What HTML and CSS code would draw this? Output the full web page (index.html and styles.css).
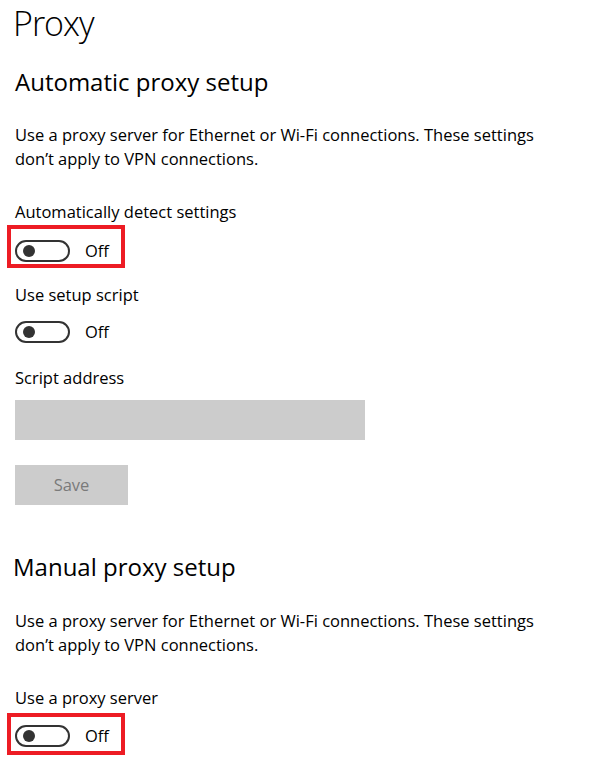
FILE: index.html
```html
<!doctype html>
<html>
  <head>
    <title>Proxy</title>
    <link rel="stylesheet" href="styles.css">
  </head>
  <body>
    <div id="main">
      <h1 class="page-title">Proxy</h1>

      <h2 class="section-title">Automatic proxy setup</h2>
      <p class="desc">Use a proxy server for Ethernet or Wi-Fi connections. These settings don’t apply to VPN connections.</p>

      <div class="label">Automatically detect settings</div>
      <div class="highlight">
        <div class="toggle"><span class="knob"></span></div>
        <span class="state">Off</span>
      </div>

      <div class="label after-box">Use setup script</div>
      <div class="toggle-row">
        <div class="toggle"><span class="knob"></span></div>
        <span class="state">Off</span>
      </div>

      <div class="label after-row">Script address</div>
      <div class="textbox"></div>
      <div class="btn">Save</div>

      <h2 class="section-title manual">Manual proxy setup</h2>
      <p class="desc">Use a proxy server for Ethernet or Wi-Fi connections. These settings don’t apply to VPN connections.</p>

      <div class="label">Use a proxy server</div>
      <div class="highlight last">
        <div class="toggle"><span class="knob"></span></div>
        <span class="state">Off</span>
      </div>
    </div>
  </body>
</html>
```

FILE: styles.css
```css
body {
  margin: 0;
  font-family: "Open Sans", "Noto Sans", sans-serif;
  font-size: 16.5px;
  color: #000;
  background: #fff;
}
#main {
  padding: 0 0 0 15px;
}
.page-title {
  margin: 0 0 0 -2px;
  font-size: 34px;
  font-weight: 300;
  letter-spacing: -1px;
  line-height: 46px;
}
.section-title {
  margin: 20px 0 0 0;
  font-size: 24px;
  font-weight: 400;
  line-height: 32px;
}
.section-title.manual {
  margin: 46px 0 0 -2px;
}
.desc {
  margin: 25px 0 0 0;
  width: 530px;
  line-height: 24px;
}
.section-title.manual + .desc {
  margin-top: 26px;
}
.label {
  margin: 29px 0 0 0;
  line-height: 24px;
}
.label.after-box {
  margin-top: 15px;
}
.label.after-row {
  margin-top: 23px;
}
.toggle-row, .highlight {
  display: flex;
  align-items: center;
}
.toggle-row {
  margin: 14px 0 0 0;
}
.highlight {
  width: 106px;
  margin: 1px 0 0 -8px;
  padding: 11px 0 2px 4px;
  border: 4px solid #ed1c24;
}
.highlight.last {
  margin-top: 3px;
  padding: 8px 0 4px 4px;
}
.toggle {
  position: relative;
  box-sizing: border-box;
  width: 55px;
  height: 22px;
  border: 2px solid #333;
  border-radius: 11px;
}
.knob {
  position: absolute;
  left: 6px;
  top: 3px;
  width: 12px;
  height: 12px;
  border-radius: 50%;
  background: #333;
}
.state {
  margin-left: 15px;
  line-height: 22px;
}
.textbox {
  margin: 10px 0 0 0;
  width: 350px;
  height: 40px;
  background: #ccc;
}
.btn {
  margin: 25px 0 0 0;
  width: 113px;
  height: 40px;
  line-height: 40px;
  text-align: center;
  background: #ccc;
  color: #7a7a7a;
}
```
